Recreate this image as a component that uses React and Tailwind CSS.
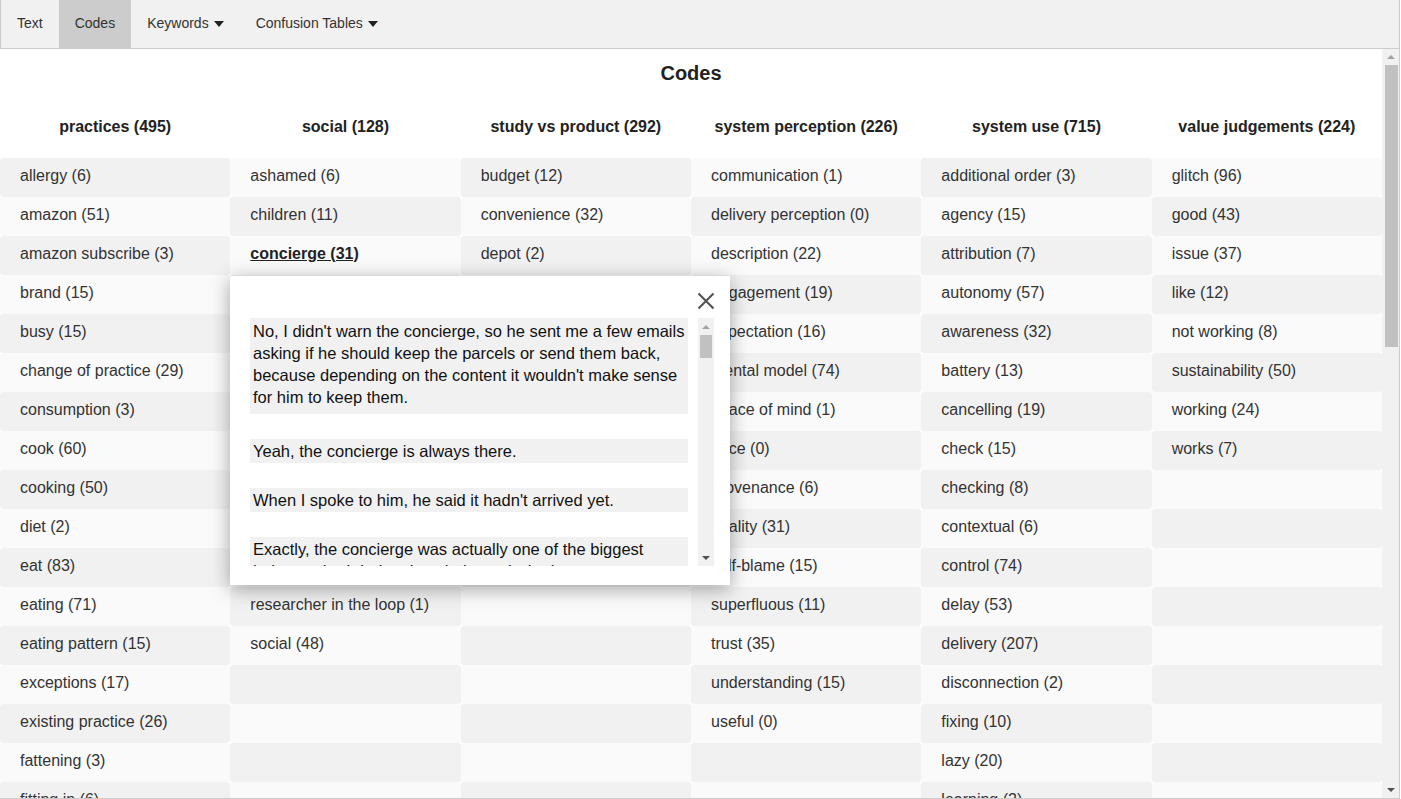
import { useState } from 'react';

const columns = [
  {
    title: 'practices (495)',
    items: ['allergy (6)', 'amazon (51)', 'amazon subscribe (3)', 'brand (15)', 'busy (15)', 'change of practice (29)', 'consumption (3)', 'cook (60)', 'cooking (50)', 'diet (2)', 'eat (83)', 'eating (71)', 'eating pattern (15)', 'exceptions (17)', 'existing practice (26)', 'fattening (3)', 'fitting in (6)', 'food (21)', 'fresh food (9)', 'groceries (14)', 'habit (18)', 'health (12)', 'household (7)', 'kitchen (4)', 'leftovers (5)', 'meal (19)', 'meal planning (11)', 'order (22)', 'planning (13)', 'portion (3)', 'recipe (8)', 'routine (16)', 'shopping (27)', 'snack (4)', 'storage (6)', 'supermarket (10)', 'waste (9)', 'weekend (5)', 'work (12)'],
  },
  {
    title: 'social (128)',
    items: ['ashamed (6)', 'children (11)', 'concierge (31)', 'family (14)', 'friends (5)', 'guests (2)', 'neighbour (3)', 'partner (7)', 'privacy (1)', 'relatives (0)', 'reputation (0)', 'researcher in the loop (1)', 'social (48)'],
  },
  {
    title: 'study vs product (292)',
    items: ['budget (12)', 'convenience (32)', 'depot (2)', 'incentive (18)', 'interview (41)', 'participation (66)', 'price (54)', 'product (39)', 'study (28)'],
  },
  {
    title: 'system perception (226)',
    items: ['communication (1)', 'delivery perception (0)', 'description (22)', 'engagement (19)', 'expectation (16)', 'mental model (74)', 'peace of mind (1)', 'price (0)', 'provenance (6)', 'quality (31)', 'self-blame (15)', 'superfluous (11)', 'trust (35)', 'understanding (15)', 'useful (0)'],
  },
  {
    title: 'system use (715)',
    items: ['additional order (3)', 'agency (15)', 'attribution (7)', 'autonomy (57)', 'awareness (32)', 'battery (13)', 'cancelling (19)', 'check (15)', 'checking (8)', 'contextual (6)', 'control (74)', 'delay (53)', 'delivery (207)', 'disconnection (2)', 'fixing (10)', 'lazy (20)', 'learning (2)', 'location (9)', 'notification (14)', 'override (6)', 'pairing (3)', 'placement (11)', 'reorder (8)', 'scanning (17)', 'sensor (12)', 'settings (5)', 'setup (21)', 'threshold (9)', 'tracking (13)', 'weight (4)'],
  },
  {
    title: 'value judgements (224)',
    items: ['glitch (96)', 'good (43)', 'issue (37)', 'like (12)', 'not working (8)', 'sustainability (50)', 'working (24)', 'works (7)'],
  },
];

const quotes = [
  "No, I didn't warn the concierge, so he sent me a few emails asking if he should keep the parcels or send them back, because depending on the content it wouldn't make sense for him to keep them.",
  'Yeah, the concierge is always there.',
  "When I spoke to him, he said it hadn't arrived yet.",
  'Exactly, the concierge was actually one of the biggest helps we had during the whole study, he knew every delivery.',
  'I think the concierge got used to it after a while.',
];

const NavItem = ({ label, active, caret, onClick }) => (
  <button
    onClick={onClick}
    className={`h-full px-4 pb-[1px] flex items-center text-[14px] text-[#333] ${active ? 'bg-[#cccccc]' : 'hover:bg-[#ddd]'}`}
  >
    {label}
    {caret && (
      <svg width="10" height="6" viewBox="0 0 10 6" className="ml-[5px] mt-[1px]">
        <path d="M0 0 L10 0 L5 6 Z" fill="#222" />
      </svg>
    )}
  </button>
);

// drawn scrollbar, since the headless page shows none
const Scrollbar = ({ width, arrowH, thumbH, thumbX }) => (
  <div className={`${width} shrink-0 h-full bg-[#f1f1f1] flex flex-col`}>
    <div className={`${arrowH} shrink-0 flex items-center justify-center`}>
      <svg width="8" height="4" viewBox="0 0 8 4"><path d="M0 4 L8 4 L4 0 Z" fill="#a3a3a3" /></svg>
    </div>
    <div className={`${thumbH} ${thumbX} shrink-0 bg-[#c1c1c1]`} />
    <div className="flex-1" />
    <div className={`${arrowH} shrink-0 flex items-center justify-center`}>
      <svg width="8" height="4" viewBox="0 0 8 4"><path d="M0 0 L8 0 L4 4 Z" fill="#505050" /></svg>
    </div>
  </div>
);

const App = () => {
  const [tab, setTab] = useState('codes');
  const [open, setOpen] = useState(true);
  const rows = Math.max(...columns.map((c) => c.items.length));

  return (
    <div className="relative w-[1400px] h-[799px] bg-white overflow-hidden" style={{ fontFamily: '"Liberation Sans", Arial, sans-serif' }}>
      <nav className="h-[49px] bg-[#f1f1f1] border-l border-r border-b border-[#cccccc] flex">
        <NavItem label="Text" active={tab === 'text'} onClick={() => setTab('text')} />
        <NavItem label="Codes" active={tab === 'codes'} onClick={() => setTab('codes')} />
        <NavItem label="Keywords" caret />
        <NavItem label="Confusion Tables" caret />
      </nav>

      <div className="h-[750px] flex border-r border-b border-[#cccccc]">
        <div className="w-[1382px] shrink-0 overflow-hidden">
          <h2 className="h-[48px] flex items-center justify-center text-[20px] font-bold text-[#222]">Codes</h2>
          <div className="grid grid-cols-6">
            {columns.map((col) => (
              <div key={col.title} className="h-[61px] pb-[1px] flex items-center justify-center text-[16px] font-bold text-[#222] whitespace-nowrap">
                {col.title}
              </div>
            ))}
            {Array.from({ length: rows }).map((_, r) =>
              columns.map((col, c) => {
                const item = col.items[r];
                const gray = (r + c) % 2 === 0;
                const bold = item === 'concierge (31)';
                return (
                  <div
                    key={`${r}-${c}`}
                    className={`h-[39px] px-5 pb-[4px] flex items-center rounded-[3px] text-[16px] text-[#333] whitespace-nowrap ${gray ? 'bg-[#f1f1f1]' : 'bg-[#fafafa]'}`}
                  >
                    {item && (
                      <span className={bold ? 'font-bold underline text-[#222]' : ''}>{item}</span>
                    )}
                  </div>
                );
              })
            )}
          </div>
        </div>
        <Scrollbar width="w-[17px]" arrowH="h-[16px]" thumbH="h-[282px]" thumbX="ml-[3px] mr-[1px]" />
      </div>

      {open && (
        <div className="absolute left-[230px] top-[276px] w-[500px] h-[309px] bg-white shadow-[0_4px_18px_rgba(0,0,0,0.35)] pl-5 pr-4 pt-[42px]">
          <button onClick={() => setOpen(false)} className="absolute right-[14px] top-[15px] w-[20px] h-[20px] flex items-center justify-center">
            <svg width="18" height="18" viewBox="0 0 18 18">
              <path d="M1.5 1.5 L16.5 16.5 M16.5 1.5 L1.5 16.5" stroke="#555" strokeWidth="2.2" />
            </svg>
          </button>
          <div className="h-[248px] flex gap-[10px]">
            <div className="w-[438px] overflow-hidden flex flex-col gap-[25px]">
              {quotes.map((q, i) => (
                <p key={i} className={`shrink-0 bg-[#f1f1f1] pl-[3px] pr-[2px] text-[16.5px] leading-[22px] text-[#111] ${i === 0 ? 'pt-[2px] pb-[6px]' : 'py-[1px]'}`}>
                  {q}
                </p>
              ))}
            </div>
            <Scrollbar width="w-[16px]" arrowH="h-[17px]" thumbH="h-[23px]" thumbX="mx-[2px]" />
          </div>
        </div>
      )}
    </div>
  );
};

export default App;
